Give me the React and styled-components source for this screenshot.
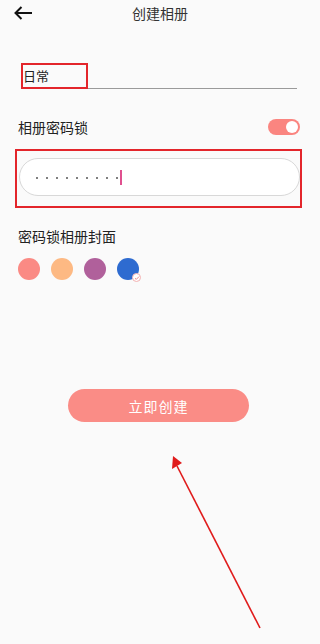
import styled, { createGlobalStyle } from 'styled-components';

const GlobalStyle = createGlobalStyle`
  body {
    margin: 0;
    background: #fafafa;
    font-family: "Noto Sans CJK SC", "Noto Sans", sans-serif;
  }
`;

const colors = ['#fa8a84', '#fdb983', '#b0609b', '#2e6bd0'];

export default function App() {
  return (
    <>
      <GlobalStyle/>
      <Page>
        <Header>
          <Back>
            <svg width="20" height="14" viewBox="0 0 20 14">
              <path d="M19 7H2.5M8.5 1L2.5 7l6 6" fill="none" stroke="#111" strokeWidth="2"/>
            </svg>
          </Back>
          <Title>创建相册</Title>
        </Header>
        <NameField>
          <NameTag>日常</NameTag>
        </NameField>
        <Row>
          <Label>相册密码锁</Label>
          <Toggle><Knob/></Toggle>
        </Row>
        <LockBox>
          <PasswordInput>
            {Array.from({ length: 9 }).map((_, i) => <Dot key={i}/>)}
            <Caret/>
          </PasswordInput>
        </LockBox>
        <CoverLabel>密码锁相册封面</CoverLabel>
        <Swatches>
          {colors.map((c, i) => (
            <Swatch key={c} color={c}>
              {i === 3 && (
                <Badge>
                  <svg width="6" height="6" viewBox="0 0 6 6">
                    <path d="M1 3.2l1.3 1.2L5 1.6" fill="none" stroke="#f08a8a" strokeWidth="1"/>
                  </svg>
                </Badge>
              )}
            </Swatch>
          ))}
        </Swatches>
        <CreateButton>立即创建</CreateButton>
        <Arrow width="320" height="644" viewBox="0 0 320 644">
          <line x1="260" y1="628" x2="177" y2="466" stroke="#e01b1b" strokeWidth="1.6"/>
          <polygon points="173,456 172,469 182,463" fill="#e01b1b"/>
        </Arrow>
      </Page>
    </>
  );
}

const Page = styled.div`
  position: relative;
  height: 644px;
  padding: 0 18px;
  overflow: hidden;
`;

const Header = styled.div`
  position: relative;
  height: 26px;
  display: flex;
  align-items: center;
  justify-content: center;
`;

const Back = styled.div`
  position: absolute;
  left: -5px;
  top: 6px;
  display: flex;
`;

const Title = styled.div`
  font-size: 14px;
  color: #333;
`;

const NameField = styled.div`
  margin: 37px 5px 0 3px;
  height: 25px;
  display: flex;
  border-bottom: 1px solid #9a9a9a;
`;

const NameTag = styled.div`
  box-sizing: border-box;
  width: 67px;
  height: 26px;
  border: 2px solid #e3252b;
  padding-left: 0;
  font-size: 13px;
  line-height: 22px;
  color: #222;
  background: #fafafa;
`;

const Row = styled.div`
  margin: 29px 2px 0 0;
  display: flex;
  align-items: center;
  justify-content: space-between;
  height: 18px;
`;

const Label = styled.div`
  font-size: 14px;
  color: #222;
`;

const Toggle = styled.div`
  width: 32px;
  height: 16px;
  border-radius: 8px;
  background: #fa8580;
  display: flex;
  align-items: center;
  justify-content: flex-end;
  padding: 0 2px;
  box-sizing: border-box;
`;

const Knob = styled.div`
  width: 12px;
  height: 12px;
  border-radius: 50%;
  background: #fff;
`;

const LockBox = styled.div`
  box-sizing: border-box;
  margin: 13px 0 0 -3px;
  height: 59px;
  border: 2px solid #e3252b;
  padding: 7px 0 0 2px;
`;

const PasswordInput = styled.div`
  box-sizing: border-box;
  width: 281px;
  height: 38px;
  border: 1px solid #d8d8d8;
  border-radius: 19px;
  background: #fff;
  display: flex;
  align-items: center;
  gap: 8px;
  padding-left: 16px;
`;

const Dot = styled.div`
  width: 2px;
  height: 2px;
  border-radius: 50%;
  background: #555;
  margin-top: 2px;
`;

const Caret = styled.div`
  width: 2px;
  height: 15px;
  background: #e0508f;
  margin-left: -6px;
`;

const CoverLabel = styled(Label)`
  margin-top: 19px;
  line-height: 18px;
`;

const Swatches = styled.div`
  display: flex;
  gap: 11px;
  margin-top: 13px;
`;

const Swatch = styled.div`
  position: relative;
  width: 22px;
  height: 22px;
  border-radius: 50%;
  background: ${p => p.color};
`;

const Badge = styled.div`
  position: absolute;
  right: -2px;
  bottom: -2px;
  width: 9px;
  height: 9px;
  border-radius: 50%;
  background: #fff;
  border: 0.5px solid #f3b0b0;
  display: flex;
  align-items: center;
  justify-content: center;
  box-sizing: border-box;
`;

const CreateButton = styled.div`
  margin: 109px 0 0 50px;
  width: 181px;
  height: 33px;
  border-radius: 17px;
  background: #fa8c86;
  color: #fff;
  font-size: 14px;
  display: flex;
  align-items: center;
  justify-content: center;
  letter-spacing: 1px;
`;

const Arrow = styled.svg`
  position: absolute;
  left: 0;
  top: 0;
  pointer-events: none;
`;
